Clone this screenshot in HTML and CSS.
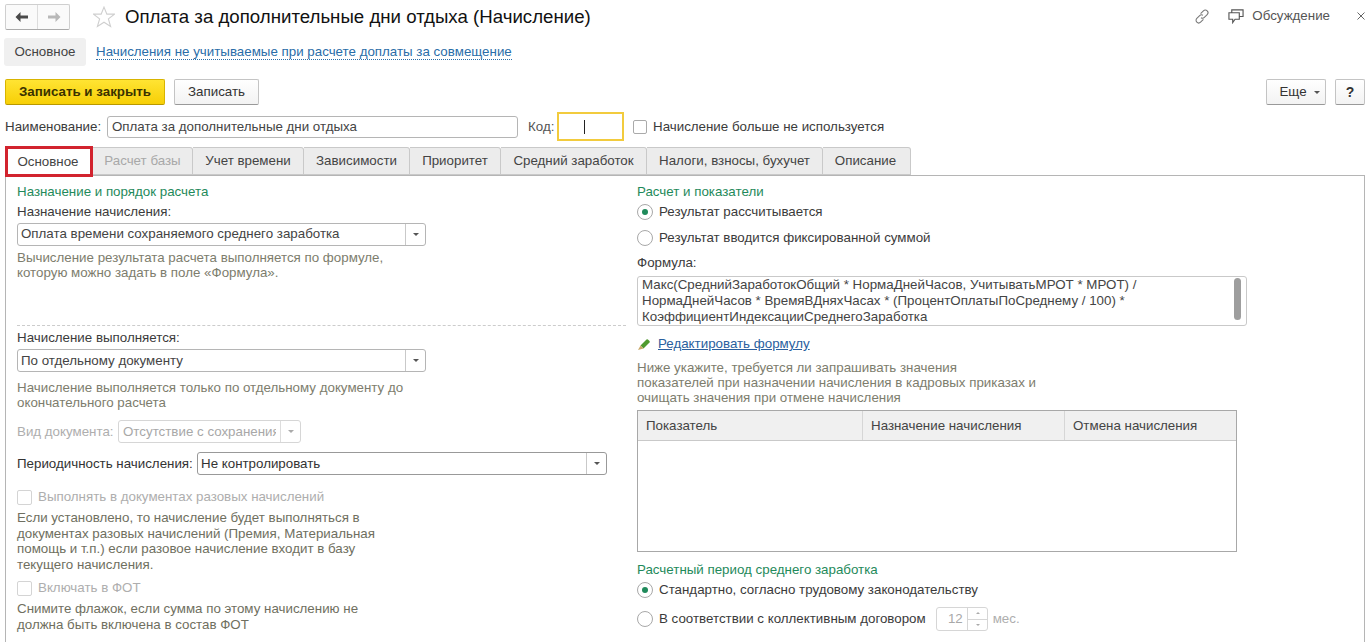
FILE: index.html
```html
<!DOCTYPE html>
<html lang="ru">
<head>
<meta charset="utf-8">
<title>Оплата за дополнительные дни отдыха (Начисление)</title>
<link rel="stylesheet" href="styles.css">
</head>
<body>
<header class="head">
  <div class="navbox">
    <span class="navbtn"><svg width="14" height="12" viewBox="0 0 14 12"><path d="M5.500 4.500H13v3H5.500V11L0.500 6l5-5z" fill="#4a4a4a"/></svg></span>
    <span class="navbtn"><svg width="14" height="12" viewBox="0 0 14 12"><path d="M8.500 4.500H1v3h7.500V11l5-5-5-5z" fill="#b8b8b8"/></svg></span>
  </div>
  <svg class="star" width="22" height="22" viewBox="0 0 20 20"><path d="M10 1l2.600 6.400h6.900l-5.500 4.300 2 7L10 14.700 4 18.700l2-7L.5 7.400h6.900z" fill="#fff" stroke="#cfcfcf"/></svg>
  <h1 class="title">Оплата за дополнительные дни отдыха (Начисление)</h1>
  <div class="head-right">
    <svg class="link-ic" width="16" height="17" viewBox="0 0 17 17"><path d="M7 5.500 10 2.500a2.700 2.700 0 0 1 4 4L11 9.500a2.700 2.700 0 0 1-3.500.3M10 11.500l-3 3a2.700 2.700 0 0 1-4-4l3-3a2.700 2.700 0 0 1 3.500-.3" fill="none" stroke="#777" stroke-width="1.100"/></svg>
    <svg class="talk-ic" width="16" height="16" viewBox="0 0 17 16"><path d="M1 4.500h11v7H7.500L5 15v-3.500H1zM4 4.500V1.500h12v7h-4" fill="#fff" stroke="#555" stroke-width="1.200"/></svg>
    <span class="talk">Обсуждение</span>
    <svg class="close" width="8" height="8" viewBox="0 0 8 8"><path d="M.5.500l7 7M7.500.500l-7 7" stroke="#666" fill="none"/></svg>
  </div>
</header>

<nav class="sections">
  <span class="section-cur">Основное</span>
  <a class="section-link">Начисления не учитываемые при расчете доплаты за совмещение</a>
</nav>

<div class="commands">
  <button class="btn btn-main">Записать и закрыть</button>
  <button class="btn btn-save">Записать</button>
  <span class="spacer"></span>
  <button class="btn btn-more">Еще <i class="caret"></i></button>
  <button class="btn btn-help">?</button>
</div>

<div class="namerow">
  <span class="lbl lbl-name">Наименование:</span>
  <div class="field field-name">Оплата за дополнительные дни отдыха</div>
  <span class="lbl lbl-code">Код:</span>
  <div class="field-code"><i class="cursor"></i></div>
  <i class="check check-top"></i>
  <span class="lbl">Начисление больше не используется</span>
</div>

<div class="tabs">
  <span class="tab tab-active">Основное</span>
  <span class="tab tab-off t2">Расчет базы</span>
  <span class="tab t3">Учет времени</span>
  <span class="tab t4">Зависимости</span>
  <span class="tab t5">Приоритет</span>
  <span class="tab t6">Средний заработок</span>
  <span class="tab t7">Налоги, взносы, бухучет</span>
  <span class="tab t8">Описание</span>
</div>

<main class="panel">
  <section class="col-left">
    <div class="group">Назначение и порядок расчета</div>
    <div class="line m4">Назначение начисления:</div>
    <div class="select sel-wide m3 sel-first"><span class="sel-text">Оплата времени сохраняемого среднего заработка</span><span class="sel-btn"><i class="caret"></i></span></div>
    <p class="hint m4">Вычисление результата расчета выполняется по формуле,<br>которую можно задать в поле «Формула».</p>
    <div class="dashed"></div>
    <div class="line m4">Начисление выполняется:</div>
    <div class="select sel-wide m3"><span class="sel-text">По отдельному документу</span><span class="sel-btn"><i class="caret"></i></span></div>
    <p class="hint m8">Начисление выполняется только по отдельному документу до<br>окончательного расчета</p>
    <div class="row m10">
      <span class="lbl off lbl-doc">Вид документа:</span>
      <div class="select sel-doc"><span class="sel-text">Отсутствие с сохранения</span><span class="sel-btn"><i class="caret caret-off"></i></span></div>
    </div>
    <div class="row m9">
      <span class="lbl lbl-per">Периодичность начисления:</span>
      <div class="select sel-per"><span class="sel-text">Не контролировать</span><span class="sel-btn"><i class="caret"></i></span></div>
    </div>
    <div class="row line m14"><i class="check check-off"></i><span class="off">Выполнять в документах разовых начислений</span></div>
    <p class="hint tall m5">Если установлено, то начисление будет выполняться в<br>документах разовых начислений (Премия, Материальная<br>помощь и т.п.) если разовое начисление входит в базу<br>текущего начисления.</p>
    <div class="row line m8"><i class="check check-off"></i><span class="off">Включать в ФОТ</span></div>
    <p class="hint tall m5">Снимите флажок, если сумма по этому начислению не<br>должна быть включена в состав ФОТ</p>
  </section>

  <section class="col-right">
    <div class="group">Расчет и показатели</div>
    <div class="row line m4"><i class="radio radio-on"></i><span>Результат рассчитывается</span></div>
    <div class="row line m10"><i class="radio"></i><span>Результат вводится фиксированной суммой</span></div>
    <div class="line m9">Формула:</div>
    <div class="formula m5">
      <div class="formula-text">Макс(СреднийЗаработокОбщий * НормаДнейЧасов, УчитыватьМРОТ * МРОТ) /<br>НормаДнейЧасов * ВремяВДняхЧасах * (ПроцентОплатыПоСреднему / 100) *<br>КоэффициентИндексацииСреднегоЗаработка</div>
      <i class="scroll"></i>
    </div>
    <div class="row line m10">
      <svg class="pencil" width="14" height="14" viewBox="0 0 14 14"><path d="M3.500 8.500 9.500 2.500a1 1 0 0 1 1.400 0l1.600 1.600a1 1 0 0 1 0 1.400l-6 6z" fill="#4f9a2e"/><path d="M3.500 8.500 1 13l5.500-1.500z" fill="#c9a868"/></svg>
      <a class="edit">Редактировать формулу</a>
    </div>
    <p class="hint m8">Ниже укажите, требуется ли запрашивать значения<br>показателей при назначении начисления в кадровых приказах и<br>очищать значения при отмене начисления</p>
    <div class="grid-box m5">
      <div class="grid-head">
        <span class="gc gc1">Показатель</span>
        <span class="gc gc2">Назначение начисления</span>
        <span class="gc gc3">Отмена начисления</span>
      </div>
    </div>
    <div class="group m10">Расчетный период среднего заработка</div>
    <div class="row line m4"><i class="radio radio-on"></i><span>Стандартно, согласно трудовому законодательству</span></div>
    <div class="row num-row m9">
      <i class="radio"></i><span>В соответствии с коллективным договором</span>
      <div class="num"><span class="num-val">12</span><span class="spin"><i class="up"></i><i class="down"></i></span></div>
      <span class="off">мес.</span>
    </div>
  </section>
</main>
</body>
</html>
```
FILE: styles.css
```css
* { box-sizing: border-box; }
html, body { margin: 0; height: 642px; overflow: hidden; }
body { background: #fff; color: #3b3b3b; font: 13.330px/16px "Liberation Sans", Arial, sans-serif; }
p { margin: 0; }
i { display: block; flex: none; }

.head { height: 38px; padding: 4px 0 0 5px; display: flex; align-items: flex-start; }
.navbox { width: 65px; height: 26px; display: flex; background: #fafafa; border: 1px solid #cfcfcf; border-bottom-color: #aaa; border-radius: 2px; }
.navbtn { flex: 1; display: flex; align-items: center; justify-content: center; }
.navbtn + .navbtn { border-left: 1px solid #dcdcdc; }
.star { margin: 2px 0 0 23px; flex: none; }
.title { margin: 2px 0 0 10px; font-size: 18.670px; line-height: 22px; font-weight: 400; color: #111; white-space: nowrap; }
.head-right { margin-left: auto; display: flex; align-items: center; height: 24px; }
.link-ic { margin-right: 18px; }
.talk-ic { margin-right: 8px; }
.talk { color: #555; }
.close { margin: 0 6px 0 27px; }

.sections { height: 28px; padding-left: 4px; display: flex; align-items: center; }
.section-cur { width: 82px; height: 28px; line-height: 28px; text-align: center; background: #f0f0f0; border-radius: 3px; color: #444; }
.section-link { margin-left: 10px; color: #2a6da8; border-bottom: 1px dotted #2a6da8; line-height: 15px; }

.commands { height: 26px; margin-top: 13px; padding: 0 6px 0 5px; display: flex; }
.btn { height: 26px; padding: 0; font: inherit; color: #333; background: linear-gradient(#fff, #f3f3f3); border: 1px solid #c4c4c4; border-bottom-color: #999; border-radius: 2px; }
.btn-main { width: 160px; font-weight: 700; color: #3a3200; background: linear-gradient(#ffe433, #f7cf06); border-color: #d8b400 #d8b400 #b89800; }
.btn-save { width: 85px; margin-left: 9px; }
.spacer { flex: 1; }
.btn-more { width: 60px; padding-left: 7px; display: flex; align-items: center; justify-content: center; gap: 7px; }
.btn-help { width: 30px; margin-left: 9px; font-weight: 700; font-size: 14px; }
.caret { width: 0; height: 0; border: 3px solid transparent; border-top: 3px solid #555; border-bottom: 0; }
.caret-off { border-top-color: #aaa; }

.namerow { height: 29px; margin-top: 7px; padding-left: 5px; display: flex; align-items: center; }
.lbl { white-space: nowrap; }
.lbl-name { width: 102px; flex: none; }
.field { height: 22px; line-height: 20px; padding-left: 4px; border: 1px solid #b5b5b5; border-radius: 3px; color: #444; }
.field-name { width: 411px; flex: none; }
.lbl-code { width: 29px; flex: none; margin-left: 10px; color: #555; }
.field-code { width: 67px; height: 29px; flex: none; border: 2px solid #f2cb3d; padding: 6px 0 0 25px; }
.cursor { width: 1px; height: 14px; background: #222; }
.check { width: 14px; height: 14px; border: 1px solid #aaa; border-radius: 2px; background: #fff; }
.check-top { margin: 0 6px 0 9px; }
.check-off { border-color: #d4d4d4; margin-right: 6px; width: 15px; height: 15px; }

.tabs { height: 31px; margin-top: 5px; padding-left: 5px; display: flex; align-items: flex-end; position: relative; z-index: 1; }
.tab { height: 28px; margin-bottom: 2px; line-height: 26px; text-align: center; background: #ececec; border: 1px solid #c9c9c9; border-left: 0; border-radius: 0 3px 0 0; color: #444; white-space: nowrap; }
.tab-active { width: 88px; height: 31px; margin: 0; padding-right: 2px; line-height: 26px; background: #fff; border: 3px solid #d2232e; border-radius: 0; }
.tab-off { color: #a8a8a8; }
.t2 { width: 100px; }
.t3 { width: 111px; }
.t4 { width: 106px; }
.t5 { width: 91px; }
.t6 { width: 146px; }
.t7 { width: 176px; }
.t8 { width: 88px; padding-right: 2px; }

.panel { height: 468px; margin: -2px 6px 0 5px; padding: 8px 0 0 11px; border-top: 1px solid #b5b5b5; border-left: 1px solid #b5b5b5; border-right: 1px solid #b5b5b5; display: grid; grid-template-columns: 620px 1fr; }
.col-left, .col-right { min-width: 0; }
.group { color: #1f8a5b; line-height: 16px; }
.line { height: 16px; line-height: 16px; white-space: nowrap; }
.row { display: flex; align-items: center; white-space: nowrap; }
.hint { color: #7d7d6d; line-height: 15px; }
.hint.tall { color: #6f6f60; line-height: 15.500px; }
.dashed { width: 609px; margin-top: 45px; border-top: 1px dashed #ccc; }
.off { color: #aeaeae; }

.m3 { margin-top: 3px; }
.m4 { margin-top: 4px; }
.m5 { margin-top: 5px; }
.m8 { margin-top: 8px; }
.m9 { margin-top: 9px; }
.m10 { margin-top: 10px; }
.m14 { margin-top: 14px; }

.select { height: 23px; display: flex; border: 1px solid #b5b5b5; border-radius: 3px; background: #fff; color: #444; }
.sel-text { flex: 1; min-width: 0; overflow: hidden; white-space: nowrap; padding-left: 3px; line-height: 21px; }
.sel-first .sel-text { line-height: 19px; }
.sel-btn { width: 20px; flex: none; display: flex; align-items: center; justify-content: center; border-left: 1px solid #c9c9c9; }
.sel-wide { width: 409px; }
.lbl-doc { width: 101px; }
.sel-doc { width: 183px; color: #a8a8a8; border-color: #d6d6d6; }
.sel-doc .sel-text { margin-right: 4px; padding-left: 4px; }
.sel-doc .sel-btn { border-left-color: #ddd; }
.lbl-per { width: 180px; color: #333; }
.sel-per { width: 410px; color: #333; border-color: #999; }

.radio { width: 16px; height: 16px; margin-right: 6px; border: 1px solid #a8a8a8; border-radius: 50%; background: #fff; display: flex; align-items: center; justify-content: center; }
.radio-on::after { content: ""; width: 6px; height: 6px; border-radius: 50%; background: #1f8a5b; }

.formula { width: 610px; height: 50px; display: flex; padding: 0 5px 0 4px; border: 1px solid #c9c9c9; border-radius: 3px; overflow: hidden; }
.formula-text { flex: 1; line-height: 16px; color: #444; white-space: nowrap; }
.scroll { width: 7px; height: 42px; margin-top: 1px; border-radius: 4px; background: #9e9e9e; }

.pencil { margin-right: 7px; }
.edit { color: #2a5f9e; text-decoration: underline; }

.grid-box { width: 600px; height: 142px; border: 1px solid #a8a8a8; }
.grid-head { height: 30px; display: flex; background: #f0f0f0; border-bottom: 1px solid #c9c9c9; }
.gc { line-height: 29px; padding-left: 8px; border-right: 1px solid #d6d6d6; color: #444; }
.gc1 { width: 225px; }
.gc2 { width: 202px; }
.gc3 { flex: 1; border-right: 0; }

.num-row { height: 24px; }
.num { width: 52px; height: 24px; margin: 0 5px 0 10px; display: flex; border: 1px solid #d6d6d6; border-radius: 3px; color: #a8a8a8; }
.num-val { flex: 1; text-align: right; padding-right: 4px; line-height: 22px; }
.spin { width: 20px; display: flex; flex-direction: column; border-left: 1px solid #d6d6d6; }
.up, .down { flex: 1; position: relative; }
.up { border-bottom: 1px solid #d6d6d6; }
.up::after, .down::after { content: ""; position: absolute; left: 8px; top: 4px; border: 2px solid transparent; }
.up::after { border-top: 0; border-bottom: 2px solid #aaa; }
.down::after { border-bottom: 0; border-top: 2px solid #aaa; }
```
